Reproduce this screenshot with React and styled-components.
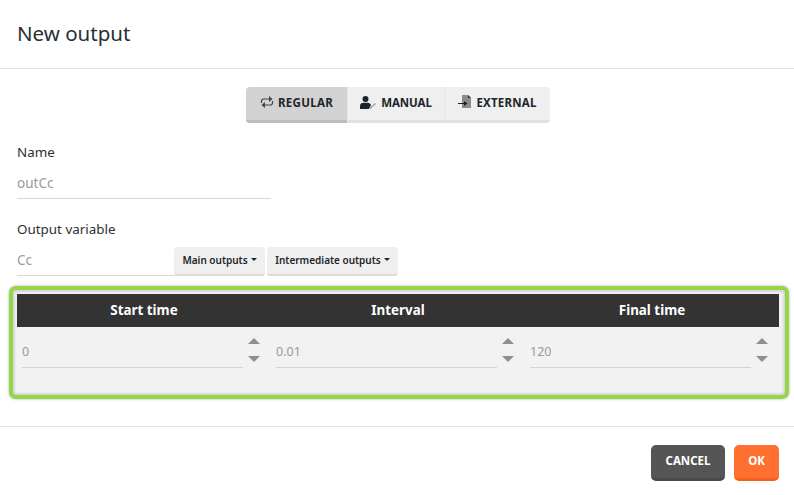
import styled, {createGlobalStyle} from "styled-components";

const GlobalStyle = createGlobalStyle`
  html, body {
    margin: 0;
    padding: 0;
    background: #fff;
  }
  body {
    font-family: "Noto Sans", "Open Sans", sans-serif;
    color: #212529;
  }
  * {
    box-sizing: border-box;
  }
`;

const Modal = styled.div`
  width: 794px;
  height: 495px;
  display: flex;
  flex-direction: column;
  overflow: hidden;
`;

const Header = styled.header`
  height: 69px;
  padding: 19px 17px 0;
  border-bottom: 1px solid #dee2e6;

  h1 {
    margin: 0;
    font-size: 20.5px;
    line-height: 28px;
    font-weight: 400;
    color: #2a2f36;
  }
`;

const Body = styled.div`
  height: 358px;
  border-bottom: 1px solid #dee2e6;
  padding-top: 18px;
  display: flex;
  flex-direction: column;
`;

const Tabs = styled.div`
  align-self: center;
  display: flex;
  height: 36px;
  margin-left: 2px;
  border-radius: 4px;
  overflow: hidden;
`;

const Tab = styled.button`
  width: ${(p) => p.$width}px;
  height: 36px;
  padding: 0 0 3px;
  border: 0;
  border-bottom: 3px solid ${(p) => (p.$active ? "#bcbcbc" : "#e2e2e2")};
  border-left: ${(p) => (p.$first ? "0" : "1px solid #e6e6e6")};
  background: ${(p) => (p.$active ? "#d2d2d2" : "#efefef")};
  display: flex;
  align-items: center;
  justify-content: center;
  gap: ${(p) => p.$gap}px;
  font-family: inherit;
  font-size: 11.5px;
  font-weight: 700;
  letter-spacing: ${(p) => p.$spacing}px;
  color: #212529;
`;

const Field = styled.div`
  padding: 0 17px;
  margin-top: ${(p) => p.$top}px;
`;

const Label = styled.div`
  font-size: 13.4px;
  line-height: 18px;
  color: #2a2f36;
`;

const TextInput = styled.div`
  width: ${(p) => p.$width}px;
  height: 29px;
  margin-top: ${(p) => p.$top || 0}px;
  border-bottom: 1px solid #d8d8d8;
  font-size: 13.5px;
  line-height: 26px;
  color: #9a9a9a;
`;

const VariableRow = styled.div`
  display: flex;
  align-items: flex-end;
  margin-top: 9px;
`;

const MenuButton = styled.button`
  height: 29px;
  padding: 0 9px 2px;
  margin-left: ${(p) => p.$gap || 0}px;
  width: ${(p) => p.$width}px;
  border: 0;
  border-bottom: 2px solid #dcdcdc;
  border-radius: 3px;
  background: #efefef;
  display: flex;
  align-items: center;
  justify-content: center;
  gap: 3px;
  white-space: nowrap;
  font-family: inherit;
  font-size: 10px;
  font-weight: 600;
  color: #212529;

  &::after {
    content: "";
    border-top: 3px solid #212529;
    border-left: 3px solid transparent;
    border-right: 3px solid transparent;
  }
`;

const Highlight = styled.section`
  margin: 10px 5px 0 9px;
  height: 113px;
  border: 4px solid #94d64a;
  border-radius: 7px;
  padding: 4px 6px 6px 4px;
  background: #f2f2f2;
  box-shadow: inset 0 0 3px 1px #c4c4c4, 0 0 3px rgba(0, 0, 0, 0.3);
`;

const TableHead = styled.div`
  display: grid;
  grid-template-columns: repeat(3, 1fr);
  height: 33px;
  background: #333;
`;

const HeadCell = styled.div`
  text-align: center;
  font-size: 13.4px;
  line-height: 33px;
  font-weight: 700;
  color: #fff;
`;

const TableRow = styled.div`
  display: grid;
  grid-template-columns: repeat(3, 1fr);
  padding-top: 13px;
`;

const NumberCell = styled.div`
  display: flex;
  padding: 0 10px 0 5px;
  gap: 4px;
`;

const NumberInput = styled.div`
  flex: 1;
  height: 28px;
  border-bottom: 1px solid #d4d4d4;
  font-size: 12.5px;
  line-height: 24px;
  color: #9a9a9a;
`;

const Spinner = styled.div`
  width: 14px;
  height: 28px;
  margin-top: -3px;
  display: flex;
  flex-direction: column;
  align-items: center;
  gap: 12px;
  padding-top: 1px;
`;

const Arrow = styled.span`
  width: 0;
  height: 0;
  border-left: 6px solid transparent;
  border-right: 6px solid transparent;
  border-${(p) => (p.$down ? "top" : "bottom")}: 6px solid #8f8f8f;
`;

const Footer = styled.footer`
  display: flex;
  justify-content: flex-end;
  gap: 9px;
  padding: 18px 15px 0 0;
`;

const ActionButton = styled.button`
  width: ${(p) => p.$width}px;
  height: 36px;
  padding: 0 0 3px;
  border: 0;
  border-bottom: 3px solid ${(p) => p.$edge};
  border-radius: 5px;
  background: ${(p) => p.$color};
  font-family: inherit;
  font-size: 11.5px;
  font-weight: 700;
  color: #fff;
`;

const RepeatIcon = () => (
  <svg width="14" height="12" viewBox="0 0 14 12" fill="none" stroke="#444" strokeWidth="1.2">
    <path d="M1.500 7V5.200C1.500 3.800 2.500 3 3.700 3H10.500" />
    <path d="M9 0L12.500 3 9 6Z" fill="#444" stroke="none" />
    <path d="M12.500 5v1.800C12.500 8.200 11.500 9 10.300 9H3.500" />
    <path d="M5 6L1.500 9 5 12Z" fill="#444" stroke="none" />
  </svg>
);

const UserIcon = () => (
  <svg width="16" height="13" viewBox="0 0 16 13">
    <circle cx="5.500" cy="3" r="3" fill="#1d2330" />
    <path d="M0 13V10C0 8 1.500 6.800 3.500 6.800H7.500C9.500 6.800 10.500 7.800 11 9L9 13Z" fill="#1d2330" />
    <path d="M10 12.500L15.500 7.500" stroke="#a0a0a0" strokeWidth="1.400" />
  </svg>
);

const ExternalIcon = () => (
  <svg width="14" height="14" viewBox="0 0 14 14">
    <path d="M4 0H10L13 3V13H4Z" fill="#8c8c8c" />
    <path d="M10 0L13 3H10Z" fill="#333" />
    <path d="M0 8.500H7" stroke="#222" strokeWidth="1.200" />
    <path d="M6 6L9.500 8.500 6 11Z" fill="#222" />
  </svg>
);

const columns = [
  {title: "Start time", value: "0"},
  {title: "Interval", value: "0.01"},
  {title: "Final time", value: "120"},
];

const App = () => {
  return (
    <Modal>
      <GlobalStyle />
      <Header>
        <h1>New output</h1>
      </Header>
      <Body>
        <Tabs>
          <Tab $first $active $width={101} $gap={4} $spacing={0.3}>
            <RepeatIcon />
            REGULAR
          </Tab>
          <Tab $width={97} $gap={5} $spacing={-0.1}>
            <UserIcon />
            MANUAL
          </Tab>
          <Tab $width={106} $gap={4} $spacing={0.2}>
            <ExternalIcon />
            EXTERNAL
          </Tab>
        </Tabs>
        <Field $top={20}>
          <Label>Name</Label>
          <TextInput $top={9} $width={254}>outCc</TextInput>
        </Field>
        <Field $top={21}>
          <Label>Output variable</Label>
          <VariableRow>
            <TextInput $width={157}>Cc</TextInput>
            <MenuButton $width={91}>Main outputs</MenuButton>
            <MenuButton $gap={2} $width={131}>Intermediate outputs</MenuButton>
          </VariableRow>
        </Field>
        <Highlight>
          <TableHead>
            {columns.map((c) => (
              <HeadCell key={c.title}>{c.title}</HeadCell>
            ))}
          </TableHead>
          <TableRow>
            {columns.map((c) => (
              <NumberCell key={c.title}>
                <NumberInput>{c.value}</NumberInput>
                <Spinner>
                  <Arrow />
                  <Arrow $down />
                </Spinner>
              </NumberCell>
            ))}
          </TableRow>
        </Highlight>
      </Body>
      <Footer>
        <ActionButton $width={74} $color="#555" $edge="#484848">CANCEL</ActionButton>
        <ActionButton $width={45} $color="#ff6f2f" $edge="#f4601c">OK</ActionButton>
      </Footer>
    </Modal>
  );
};

export default App;
